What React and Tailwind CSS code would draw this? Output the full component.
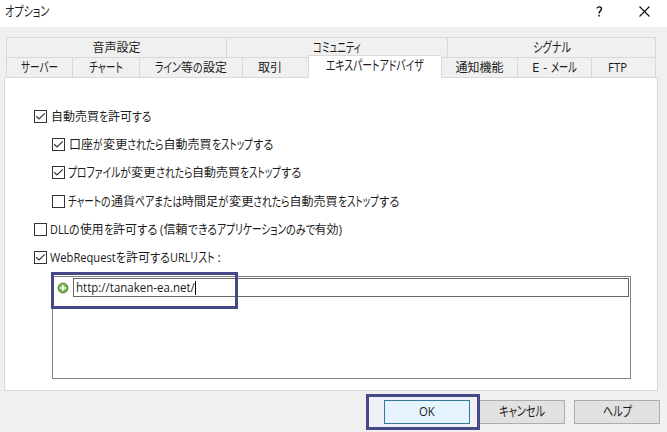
import { useLayoutEffect, useRef } from "react";

const upperTabs = [
  { runs: [["音声設定", 48]], width: "w-[220px]" },
  { runs: [["コミュニティ", 48]], width: "w-[221px]" },
  { runs: [["シグナル", 38]], width: "w-[208px]" },
];

const lowerTabs = [
  { runs: [["サーバー", 37]], width: "w-[66px]" },
  { runs: [["チャート", 34]], width: "w-[67px]" },
  { runs: [["ライン", 26], ["等", 12], ["の", 10], ["設定", 24]], width: "w-[103px]" },
  { runs: [["取引", 24]], width: "w-[66px]", align: "pr-[11px]" },
  { runs: [["エキスパートアドバイザ", 98]], width: "w-[133px]", active: true },
  { runs: [["通知機能", 48]], width: "w-[76px]" },
  { runs: [["E - ", 19], ["メール", 26]], width: "w-[74px]" },
  { runs: [["FTP", 19]], width: "w-[64px]", align: "pr-[13px]" },
];

const stopTrading = [
  ["変更", 24.5],
  ["されたら", 36.5],
  ["自動売買", 48],
  ["を", 9],
  ["ストップ", 32],
  ["する", 20],
];

const options = [
  {
    checked: true,
    row: "pl-[29px] mb-[15px]",
    gap: "ml-1",
    runs: [["自動売買", 48], ["を", 9], ["許可", 24], ["する", 19]],
  },
  {
    checked: true,
    row: "pl-[47px] mb-[15px]",
    gap: "ml-1",
    runs: [["口座", 24], ["が", 9.5], ...stopTrading],
  },
  {
    checked: true,
    row: "pl-[47px] mb-4",
    gap: "ml-[3px]",
    runs: [["プロファイル", 52], ["が", 11], ...stopTrading],
  },
  {
    checked: false,
    row: "pl-[47px] mb-[15px]",
    gap: "ml-[3px]",
    runs: [
      ["チャート", 33],
      ["の", 10],
      ["通貨", 24],
      ["ペア", 19],
      ["または", 28],
      ["時間足", 36],
      ["が", 10.5],
      ...stopTrading,
    ],
  },
  {
    checked: false,
    row: "pl-[29px] mb-[15px]",
    gap: "ml-[3px]",
    runs: [
      ["DLL", 19],
      ["の", 11],
      ["使用", 23.5],
      ["を", 9.5],
      ["許可", 24],
      ["する", 20],
      [" (", 6.5],
      ["信頼", 24],
      ["できる", 29],
      ["アプリケーション", 69],
      ["のみで", 29],
      ["有効", 24],
      [")", 4],
    ],
  },
  {
    checked: true,
    row: "pl-[29px]",
    gap: "ml-[3px]",
    runs: [
      ["WebRequest", 66],
      ["を", 10],
      ["許可", 24],
      ["する", 19.5],
      ["URL", 20],
      ["リスト", 25],
      [" :", 6],
    ],
  },
];

// Kana are tall and narrow next to the kanji
function runSize(text) {
  if (/^[\u30a0-\u30ff]/.test(text)) return "text-[13.5px] -mt-px";
  if (/^[\u3040-\u309f]/.test(text)) return "text-[13px] -mt-px";
  return "text-[12px]";
}

// Squeezes a run of glyphs into the given advance width
function Run({ text, width }) {
  const ref = useRef(null);

  useLayoutEffect(() => {
    const fit = () => {
      const el = ref.current;
      if (el && el.offsetWidth) {
        el.style.transform = `scaleX(${width / el.offsetWidth})`;
      }
    };
    fit();
    document.fonts?.ready.then(fit);
  }, [text, width]);

  return (
    <span className={`block shrink-0 leading-[14px] ${runSize(text)}`} style={{ width }}>
      <span ref={ref} className="inline-block origin-left whitespace-pre">
        {text}
      </span>
    </span>
  );
}

function Label({ runs }) {
  return (
    <span className="flex shrink-0 h-[14px] leading-[14px] [font-feature-settings:'palt']">
      {runs.map(([text, width], i) => (
        <Run key={i} text={text} width={width} />
      ))}
    </span>
  );
}

function Checkbox({ checked }) {
  return (
    <span className="w-[13px] h-[13px] shrink-0 border border-[#333] bg-white">
      {checked && (
        <svg viewBox="0 0 11 11" className="block w-[11px] h-[11px]" fill="none" stroke="#333" strokeWidth="1.2">
          <path d="M1.2 5.3 L4 8 L9.8 2.4" />
        </svg>
      )}
    </span>
  );
}

function Tab({ tab }) {
  if (tab.active) {
    return (
      <div className={`${tab.width} relative h-[23px] -mt-0.5 -mb-px shrink-0 flex justify-center pt-[3px] bg-white border-l border-t border-[#d9d9d9]`}>
        <Label runs={tab.runs} />
      </div>
    );
  }
  return (
    <div className={`${tab.width} ${tab.align || ""} h-5 shrink-0 flex justify-center pt-[3px] border-l border-t border-[#d9d9d9]`}>
      <Label runs={tab.runs} />
    </div>
  );
}

function TitleBar() {
  return (
    <div className="h-[27px] bg-white flex items-start">
      <div className="pl-[5px] pt-[5px]">
        <Label runs={[["オプション", 44]]} />
      </div>
      <div className="ml-auto flex pt-1.5 pr-[17px]">
        <svg viewBox="0 0 7 11" className="w-[7px] h-[11px] mr-9" fill="none" stroke="#111" strokeWidth="1.4">
          <path d="M1 2.3 C1.4 0.5 5.5 0.2 5.5 3 C5.5 4.9 3.1 4.9 3.1 7.4 M3.1 8.8 V10.4" />
        </svg>
        <svg viewBox="0 0 11 11" className="w-[11px] h-[11px]" fill="none" stroke="#111" strokeWidth="1.1">
          <path d="M0.5 0.5 L10.5 10.5 M10.5 0.5 L0.5 10.5" />
        </svg>
      </div>
    </div>
  );
}

function UrlList() {
  return (
    <div className="relative ml-[47px] mt-3 w-[579px] h-[103px] border border-[#828282] p-px">
      <div className="flex items-center">
        <svg viewBox="0 0 12 12" className="w-3 h-3 ml-[3px] mr-1 mt-px shrink-0">
          <circle cx="6" cy="6" r="5" fill="#6aa944" stroke="#4b7b35" strokeWidth="0.8" />
          <circle cx="6" cy="5.5" r="3.8" fill="#82bd57" />
          <path d="M6 3.2 V8.8 M3.2 6 H8.8" stroke="#fff" strokeWidth="1.7" />
        </svg>
        <div className="flex-1 h-[19px] border border-[#666] pl-0.5 flex items-center">
          <Label runs={[["http://tanaken-ea.net/", 119]]} />
          <span className="w-px h-[14px] bg-black" />
        </div>
      </div>
      <div className="absolute -left-0.5 -top-[5px] w-[187px] h-[37px] border-[3px] border-[#454985]" />
    </div>
  );
}

function Button({ runs, primary }) {
  return (
    <button
      className={`w-[86px] h-6 flex justify-center pt-1 border ${
        primary ? "bg-[#e4f3fd] border-[#35789c]" : "bg-[#e1e1e1] border-[#adadad]"
      }`}
    >
      <Label runs={runs} />
    </button>
  );
}

function App() {
  return (
    <div className="w-[667px] h-[432px] overflow-hidden bg-[#f0f0f0] text-[12px] text-[#1c1c1c] font-['Open_Sans','Noto_Sans_CJK_JP',sans-serif]">
      <TitleBar />

      <div className="mt-2.5 ml-1.5 w-[650px]">
        <div className="flex border-r border-[#d9d9d9]">
          {upperTabs.map((tab, i) => (
            <Tab key={i} tab={tab} />
          ))}
        </div>
        <div className="flex border-r border-[#d9d9d9]">
          {lowerTabs.map((tab, i) => (
            <Tab key={i} tab={tab} />
          ))}
        </div>
      </div>

      <div className="ml-1 w-[654px] h-[314px] bg-white border border-[#d9d9d9] pt-8">
        {options.map((option, i) => (
          <div key={i} className={`${option.row} h-[13px] flex items-center`}>
            <Checkbox checked={option.checked} />
            <span className={option.gap}>
              <Label runs={option.runs} />
            </span>
          </div>
        ))}
        <UrlList />
      </div>

      <div className="flex mt-[3px] pl-[366px]">
        <div className="w-[114px] h-9 shrink-0 relative z-10 border-[3px] border-[#454985] bg-[#eff0f8] pl-[15px] pt-[3px]">
          <Button runs={[["OK", 16]]} primary />
        </div>
        <div className="flex pt-1.5 -ml-px gap-[9px]">
          <Button runs={[["キャンセル", 46]]} />
          <Button runs={[["ヘルプ", 29]]} />
        </div>
      </div>
    </div>
  );
}

export default App;
